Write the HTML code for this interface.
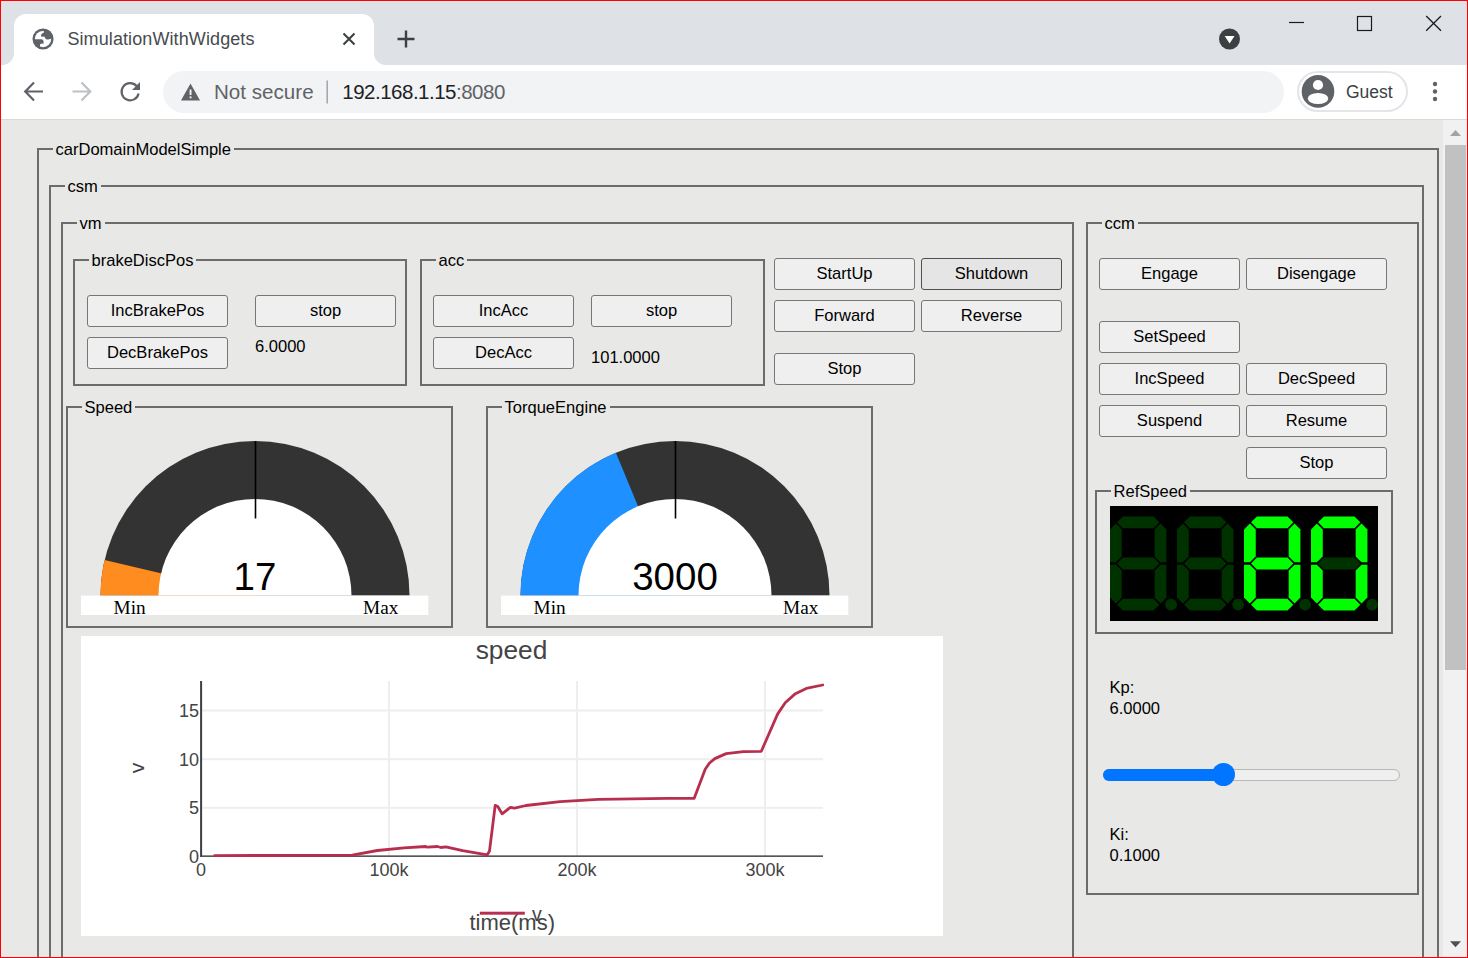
<!DOCTYPE html>
<html>
<head>
<meta charset="utf-8">
<title>SimulationWithWidgets</title>
<style>
html,body{margin:0;padding:0;}
body{width:1468px;height:958px;position:relative;overflow:hidden;background:#e8e8e6;font-family:"Liberation Sans",sans-serif;font-size:16px;color:#000;}
.abs{position:absolute;}
#frame{position:absolute;left:0;top:0;width:1466px;height:956px;border:1px solid #ff0000;z-index:100;pointer-events:none;}
/* browser chrome */
#titlebar{position:absolute;left:0;top:0;width:1468px;height:65px;background:#dee1e6;}
#tab{position:absolute;left:14px;top:14px;width:360px;height:51px;background:#fff;border-radius:12px 12px 0 0;}
#tabl{position:absolute;left:2px;top:53px;width:12px;height:12px;background:radial-gradient(circle at 0 0,#dee1e6 11.5px,#fff 12.5px);}
#tabr{position:absolute;left:374px;top:53px;width:12px;height:12px;background:radial-gradient(circle at 100% 0,#dee1e6 11.5px,#fff 12.5px);}
#tabtitle{position:absolute;left:67.4px;top:27.3px;font-size:18px;letter-spacing:0.1px;color:#474b4f;white-space:nowrap;line-height:24px;}
#toolbar{position:absolute;left:0;top:65px;width:1468px;height:54px;background:#fff;border-bottom:1px solid #d8d9db;}
#omni{position:absolute;left:163px;top:71px;width:1121px;height:42px;border-radius:21px;background:#f1f3f4;}
.ui{font-size:20px;line-height:28px;white-space:nowrap;}
#guest{position:absolute;left:1297px;top:71px;width:110.5px;height:41px;border:2px solid #e3e5e8;border-radius:21px;box-sizing:border-box;}
/* page */
.fs{position:absolute;border:2px solid #6c6c6c;box-sizing:border-box;}
.lg{position:absolute;background:#e8e8e6;white-space:nowrap;line-height:18px;height:18px;padding:0 3px;font-size:16.55px;margin:1px 0 0 -0.5px;}
.btn{position:absolute;box-sizing:border-box;width:141px;height:32px;border:1px solid #767676;border-radius:3px;background:#efefef;text-align:center;line-height:29px;font-size:16.55px;white-space:nowrap;}
.btn.hov{background:#e5e5e5;border-color:#4f4f4f;}
.txt{position:absolute;white-space:nowrap;line-height:18px;font-size:16.55px;margin-top:1px;}
</style>
</head>
<body>
<!-- BROWSER CHROME -->
<div id="titlebar"></div>
<div id="tab"></div><div id="tabl"></div><div id="tabr"></div>
<div id="tabtitle">SimulationWithWidgets</div>
<div id="toolbar"></div>
<div id="omni"></div>
<!-- CHROME ICONS -->
<svg class="abs" style="left:0;top:0;" width="1468" height="120" viewBox="0 0 1468 120">
<!-- favicon globe -->
<g transform="translate(43.03,39.03)">
<circle cx="0" cy="0" r="10.55" fill="#5f6368"/>
<circle cx="0" cy="0" r="8.15" fill="#fff"/>
<path d="M1.25 -9.5 L0.63 -6.26 Q-1.4 -5.6 -1.9 -4.2 L-2.04 -2.5 L1.57 -2.19 Q1.8 -0.6 2.9 -0.1 Q5 1.2 7.83 -0.31 L9.5 -0.5 L9 -5 L6 -8.5 Z" fill="#5f6368"/>
<path d="M-9.5 0.16 L-1.25 0.16 Q0.4 0.5 0.5 2.2 L0.63 4.38 L-2.2 4.8 Q-3.2 5.4 -3.13 6.9 L-2.5 9.5 L-6.5 7.5 L-9 4 Z" fill="#5f6368"/>
</g>
<!-- tab close -->
<path d="M343.5 33.5 L354.5 44.5 M354.5 33.5 L343.5 44.5" stroke="#3c4043" stroke-width="2.1" fill="none"/>
<!-- new tab plus -->
<path d="M397.5 39 L414.5 39 M406 30.5 L406 47.5" stroke="#3c4043" stroke-width="2.4" fill="none"/>
<!-- tab search -->
<circle cx="1229.5" cy="39" r="10.5" fill="#3c4043"/>
<path d="M1224.7 36 L1234.5 36 L1229.6 43.6 Z" fill="#fff"/>
<!-- window controls -->
<path d="M1289 22.5 L1304 22.5" stroke="#1b1b1b" stroke-width="1.2"/>
<rect x="1357.5" y="16.5" width="14" height="14" fill="none" stroke="#1b1b1b" stroke-width="1.2"/>
<path d="M1426.2 16 L1441 30.8 M1441 16 L1426.2 30.8" stroke="#1b1b1b" stroke-width="1.3"/>
<!-- back -->
<path d="M43 91.5 L26 91.5 M34 82.5 L25.2 91.5 L34 100.5" stroke="#5f6368" stroke-width="2.2" fill="none"/>
<!-- forward -->
<path d="M72.5 91.5 L89.5 91.5 M81.5 82.5 L90.3 91.5 L81.5 100.5" stroke="#bdc1c6" stroke-width="2.2" fill="none"/>
<!-- reload -->
<path d="M136.6 86 A8.6 8.6 0 1 0 138.6 93.5" stroke="#5f6368" stroke-width="2.2" fill="none"/>
<path d="M140 82 L140 90 L132 90 Z" fill="#5f6368"/>
<!-- warning -->
<path d="M190.5 83.5 L200 100.5 L181 100.5 Z" fill="#5f6368"/>
<rect x="189.6" y="89.5" width="1.9" height="5.5" fill="#f1f3f4"/>
<rect x="189.6" y="96.4" width="1.9" height="1.9" fill="#f1f3f4"/>
<!-- separator -->
<rect x="326.5" y="80.5" width="1.4" height="23" fill="#9aa0a6"/>
<!-- guest avatar -->
<clipPath id="avc"><circle cx="1318" cy="91.4" r="16.3"/></clipPath>
<circle cx="1318" cy="91.4" r="16.3" fill="#5f6368"/>
<circle cx="1318" cy="85" r="5.1" fill="#fff"/>
<ellipse cx="1318" cy="98.5" rx="10.2" ry="5.5" fill="#fff" clip-path="url(#avc)"/>
<!-- menu -->
<circle cx="1435" cy="84" r="2.2" fill="#5f6368"/><circle cx="1435" cy="91.5" r="2.2" fill="#5f6368"/><circle cx="1435" cy="99" r="2.2" fill="#5f6368"/>
</svg>
<div class="abs ui" style="left:214px;top:78px;color:#5f6368;font-size:20.6px;">Not secure</div>
<div class="abs ui" style="left:342.3px;top:77.6px;color:#202124;font-size:20.5px;letter-spacing:-0.5px;">192.168.1.15<span style="color:#5f6368">:8080</span></div>
<div id="guest"></div>
<div class="abs ui" style="left:1346px;top:78px;color:#3c4043;font-size:17.5px;">Guest</div>
<!-- PAGE -->
<div id="page">
<div class="fs" style="left:37px;top:148px;width:1402px;height:900px;"></div>
<div class="lg" style="left:53px;top:140px;">carDomainModelSimple</div>
<div class="fs" style="left:49px;top:185px;width:1375px;height:900px;"></div>
<div class="lg" style="left:65px;top:177px;">csm</div>
<div class="fs" style="left:61px;top:222px;width:1013px;height:900px;"></div>
<div class="lg" style="left:77px;top:214px;">vm</div>
<div class="fs" style="left:1086px;top:222px;width:333px;height:673px;"></div>
<div class="lg" style="left:1102px;top:214px;">ccm</div>
<!-- VM CONTENT -->
<div class="fs" style="left:73px;top:259px;width:334px;height:127px;"></div>
<div class="lg" style="left:89px;top:251px;">brakeDiscPos</div>
<div class="btn" style="left:87px;top:295px;">IncBrakePos</div>
<div class="btn" style="left:255px;top:295px;">stop</div>
<div class="btn" style="left:87px;top:337px;">DecBrakePos</div>
<div class="txt" style="left:255px;top:337px;">6.0000</div>
<div class="fs" style="left:420px;top:259px;width:345px;height:127px;"></div>
<div class="lg" style="left:436px;top:251px;">acc</div>
<div class="btn" style="left:433px;top:295px;">IncAcc</div>
<div class="btn" style="left:591px;top:295px;">stop</div>
<div class="btn" style="left:433px;top:337px;">DecAcc</div>
<div class="txt" style="left:591px;top:348px;">101.0000</div>
<div class="btn" style="left:774px;top:258px;">StartUp</div>
<div class="btn hov" style="left:921px;top:258px;">Shutdown</div>
<div class="btn" style="left:774px;top:300px;">Forward</div>
<div class="btn" style="left:921px;top:300px;">Reverse</div>
<div class="btn" style="left:774px;top:353px;">Stop</div>
<div class="fs" style="left:66px;top:406px;width:387px;height:222px;"></div>
<div class="lg" style="left:82px;top:398px;">Speed</div>
<svg class="abs" style="left:81px;top:430px;" width="348" height="186" viewBox="81 430 348 186">
<path d="M100.5 595.5 A154.5 154.5 0 0 1 409.5 595.5 Z" fill="#333333"/>
<path d="M255 595.5 L100.5 595.5 A154.5 154.5 0 0 1 104.65 559.95 Z" fill="#ff8c1e"/>
<path d="M158.5 595.5 A96.5 96.5 0 0 1 351.5 595.5 Z" fill="#ffffff"/>
<rect x="81" y="595.6" width="347.3" height="19.4" fill="#ffffff"/>
<line x1="255.5" y1="441" x2="255.5" y2="518.5" stroke="#000" stroke-width="1.6"/>
<text x="255" y="589.5" text-anchor="middle" font-family="Liberation Sans, sans-serif" font-size="38.5" fill="#000">17</text>
<text x="129.7" y="613.5" text-anchor="middle" font-family="Liberation Serif, serif" font-size="19.3" fill="#000">Min</text>
<text x="380.7" y="613.5" text-anchor="middle" font-family="Liberation Serif, serif" font-size="19.3" fill="#000">Max</text>
</svg>
<div class="fs" style="left:486px;top:406px;width:387px;height:222px;"></div>
<div class="lg" style="left:502px;top:398px;">TorqueEngine</div>
<svg class="abs" style="left:501px;top:430px;" width="348" height="186" viewBox="501 430 348 186">
<path d="M520.5 595.5 A154.5 154.5 0 0 1 829.5 595.5 Z" fill="#333333"/>
<path d="M675 595.5 L520.5 595.5 A154.5 154.5 0 0 1 615.88 452.76 Z" fill="#1e90ff"/>
<path d="M578.5 595.5 A96.5 96.5 0 0 1 771.5 595.5 Z" fill="#ffffff"/>
<rect x="501" y="595.6" width="347.3" height="19.4" fill="#ffffff"/>
<line x1="675.5" y1="441" x2="675.5" y2="518.5" stroke="#000" stroke-width="1.6"/>
<text x="675" y="589.5" text-anchor="middle" font-family="Liberation Sans, sans-serif" font-size="38.5" fill="#000">3000</text>
<text x="549.7" y="613.5" text-anchor="middle" font-family="Liberation Serif, serif" font-size="19.3" fill="#000">Min</text>
<text x="800.7" y="613.5" text-anchor="middle" font-family="Liberation Serif, serif" font-size="19.3" fill="#000">Max</text>
</svg>
<svg class="abs" style="left:81px;top:636px;" width="862" height="300" viewBox="81 636 862 300">
<rect x="81" y="636" width="862" height="300" fill="#ffffff"/>
<rect x="388" y="681" width="2" height="175" fill="#eeeeee"/>
<rect x="576" y="681" width="2" height="175" fill="#eeeeee"/>
<rect x="764" y="681" width="2" height="175" fill="#eeeeee"/>
<rect x="202" y="709.5" width="621" height="2" fill="#eeeeee"/>
<rect x="202" y="758.2" width="621" height="2" fill="#eeeeee"/>
<rect x="202" y="806.8" width="621" height="2" fill="#eeeeee"/>
<rect x="201" y="855.4" width="622" height="1.5" fill="#444444"/>
<rect x="200.1" y="681" width="2" height="176" fill="#3f3f3f"/>
<path d="M214.7 855.6 L352.3 855.2 L377.4 850.5 L404.1 847.8 L425.8 846.5 L427.5 847.2 L437.5 846.5 L440.9 847.5 L445.9 846.8 L462.6 850.6 L487.3 854.8 L489.5 851.0 L495.2 805.4 L497.8 806.5 L502.1 813.9 L510.4 807.3 L514.5 808.2 L525.9 805.5 L560.2 801.7 L598.4 799.4 L667.0 798.3 L694.2 798.3 L705.2 769.3 L709.5 763.0 L714.8 758.6 L726.2 753.6 L743.4 751.7 L761.3 751.3 L777.7 713.9 L785.4 702.5 L794.9 694.1 L806.3 688.4 L822.7 685.0" fill="none" stroke="#b82e4e" stroke-width="2.8" stroke-linejoin="round" stroke-linecap="round"/>
<text x="511.5" y="658.7" text-anchor="middle" font-family="Liberation Sans, sans-serif" font-size="26.3" fill="#444444">speed</text>
<text x="199" y="717.0" text-anchor="end" font-family="Liberation Sans, sans-serif" font-size="18" fill="#444444">15</text>
<text x="199" y="765.7" text-anchor="end" font-family="Liberation Sans, sans-serif" font-size="18" fill="#444444">10</text>
<text x="199" y="814.3" text-anchor="end" font-family="Liberation Sans, sans-serif" font-size="18" fill="#444444">5</text>
<text x="199" y="862.5" text-anchor="end" font-family="Liberation Sans, sans-serif" font-size="18" fill="#444444">0</text>
<text x="201" y="876" text-anchor="middle" font-family="Liberation Sans, sans-serif" font-size="18" fill="#444444">0</text>
<text x="389" y="876" text-anchor="middle" font-family="Liberation Sans, sans-serif" font-size="18" fill="#444444">100k</text>
<text x="577" y="876" text-anchor="middle" font-family="Liberation Sans, sans-serif" font-size="18" fill="#444444">200k</text>
<text x="765" y="876" text-anchor="middle" font-family="Liberation Sans, sans-serif" font-size="18" fill="#444444">300k</text>
<text transform="translate(144,768) rotate(-90)" text-anchor="middle" font-family="Liberation Sans, sans-serif" font-size="21" fill="#444444">v</text>
<text x="512.2" y="930" text-anchor="middle" font-family="Liberation Sans, sans-serif" font-size="22" fill="#444444">time(ms)</text>
<rect x="479.8" y="911.7" width="45" height="3" fill="#b82e4e"/>
<text x="532" y="921" font-family="Liberation Sans, sans-serif" font-size="19.5" fill="#444444">v</text>
</svg>
<!-- CCM CONTENT -->
<div class="btn" style="left:1099px;top:258px;">Engage</div>
<div class="btn" style="left:1246px;top:258px;">Disengage</div>
<div class="btn" style="left:1099px;top:321px;">SetSpeed</div>
<div class="btn" style="left:1099px;top:363px;">IncSpeed</div>
<div class="btn" style="left:1246px;top:363px;">DecSpeed</div>
<div class="btn" style="left:1099px;top:405px;">Suspend</div>
<div class="btn" style="left:1246px;top:405px;">Resume</div>
<div class="btn" style="left:1246px;top:447px;">Stop</div>
<div class="fs" style="left:1095px;top:490px;width:298px;height:144px;"></div>
<div class="lg" style="left:1111px;top:482px;">RefSpeed</div>
<div class="abs" style="left:1110px;top:506px;width:268px;height:115px;background:#000;"></div>
<svg class="abs" style="left:1110px;top:506px;" width="67" height="115" viewBox="0 0 57 80" preserveAspectRatio="xMidYMid meet">
<polygon points="11 0,37 0,42 5,37 10,11 10,6 5" fill="#003200"/>
<polygon points="0 11,5 6,10 11,10 34,5 39,0 39" transform="translate(48,0) scale(-1,1)" fill="#003200"/>
<polygon points="0 11,5 6,10 11,10 34,5 39,0 39" transform="translate(48,80) scale(-1,-1)" fill="#003200"/>
<polygon points="11 0,37 0,42 5,37 10,11 10,6 5" transform="translate(0,70)" fill="#003200"/>
<polygon points="0 11,5 6,10 11,10 34,5 39,0 39" transform="translate(0,80) scale(1,-1)" fill="#003200"/>
<polygon points="0 11,5 6,10 11,10 34,5 39,0 39" fill="#003200"/>
<polygon points="11 0,37 0,42 5,37 10,11 10,6 5" transform="translate(0,35)" fill="#003200"/>
<circle cx="52" cy="75" r="5" fill="#003200"/>
</svg>
<svg class="abs" style="left:1177px;top:506px;" width="67" height="115" viewBox="0 0 57 80" preserveAspectRatio="xMidYMid meet">
<polygon points="11 0,37 0,42 5,37 10,11 10,6 5" fill="#003200"/>
<polygon points="0 11,5 6,10 11,10 34,5 39,0 39" transform="translate(48,0) scale(-1,1)" fill="#003200"/>
<polygon points="0 11,5 6,10 11,10 34,5 39,0 39" transform="translate(48,80) scale(-1,-1)" fill="#003200"/>
<polygon points="11 0,37 0,42 5,37 10,11 10,6 5" transform="translate(0,70)" fill="#003200"/>
<polygon points="0 11,5 6,10 11,10 34,5 39,0 39" transform="translate(0,80) scale(1,-1)" fill="#003200"/>
<polygon points="0 11,5 6,10 11,10 34,5 39,0 39" fill="#003200"/>
<polygon points="11 0,37 0,42 5,37 10,11 10,6 5" transform="translate(0,35)" fill="#003200"/>
<circle cx="52" cy="75" r="5" fill="#003200"/>
</svg>
<svg class="abs" style="left:1244px;top:506px;" width="67" height="115" viewBox="0 0 57 80" preserveAspectRatio="xMidYMid meet">
<polygon points="11 0,37 0,42 5,37 10,11 10,6 5" fill="#00ff00"/>
<polygon points="0 11,5 6,10 11,10 34,5 39,0 39" transform="translate(48,0) scale(-1,1)" fill="#00ff00"/>
<polygon points="0 11,5 6,10 11,10 34,5 39,0 39" transform="translate(48,80) scale(-1,-1)" fill="#00ff00"/>
<polygon points="11 0,37 0,42 5,37 10,11 10,6 5" transform="translate(0,70)" fill="#00ff00"/>
<polygon points="0 11,5 6,10 11,10 34,5 39,0 39" transform="translate(0,80) scale(1,-1)" fill="#00ff00"/>
<polygon points="0 11,5 6,10 11,10 34,5 39,0 39" fill="#00ff00"/>
<polygon points="11 0,37 0,42 5,37 10,11 10,6 5" transform="translate(0,35)" fill="#00ff00"/>
<circle cx="52" cy="75" r="5" fill="#003200"/>
</svg>
<svg class="abs" style="left:1311px;top:506px;" width="67" height="115" viewBox="0 0 57 80" preserveAspectRatio="xMidYMid meet">
<polygon points="11 0,37 0,42 5,37 10,11 10,6 5" fill="#00ff00"/>
<polygon points="0 11,5 6,10 11,10 34,5 39,0 39" transform="translate(48,0) scale(-1,1)" fill="#00ff00"/>
<polygon points="0 11,5 6,10 11,10 34,5 39,0 39" transform="translate(48,80) scale(-1,-1)" fill="#00ff00"/>
<polygon points="11 0,37 0,42 5,37 10,11 10,6 5" transform="translate(0,70)" fill="#00ff00"/>
<polygon points="0 11,5 6,10 11,10 34,5 39,0 39" transform="translate(0,80) scale(1,-1)" fill="#00ff00"/>
<polygon points="0 11,5 6,10 11,10 34,5 39,0 39" fill="#00ff00"/>
<polygon points="11 0,37 0,42 5,37 10,11 10,6 5" transform="translate(0,35)" fill="#003200"/>
<circle cx="52" cy="75" r="5" fill="#003200"/>
</svg>
<div class="txt" style="left:1109.5px;top:678px;">Kp:</div><div class="txt" style="left:1109.5px;top:699px;">6.0000</div>
<div class="txt" style="left:1109.5px;top:825px;">Ki:</div><div class="txt" style="left:1109.5px;top:846px;">0.1000</div>
<div class="abs" style="left:1103px;top:768.5px;width:297px;height:12px;box-sizing:border-box;border:1px solid #b8b8b8;border-radius:6px;background:#efefef;"></div>
<div class="abs" style="left:1103px;top:768.5px;width:122px;height:12px;border-radius:6px;background:#0075ff;"></div>
<div class="abs" style="left:1212px;top:762.5px;width:23px;height:23px;border-radius:50%;background:#0075ff;"></div>
</div>
<!-- SCROLLBAR -->
<div class="abs" style="left:1443px;top:120px;width:24px;height:838px;background:#f1f1f1;"></div>
<div class="abs" style="left:1445px;top:145px;width:21px;height:525px;background:#c1c1c1;"></div>
<svg class="abs" style="left:1443px;top:120px;" width="24" height="838" viewBox="0 0 24 838"><path d="M7 16 L12.5 10 L18 16 Z" fill="#a3a3a3"/><path d="M7 821.3 L18 821.3 L12.5 827.3 Z" fill="#505050"/></svg>
<div id="frame"></div>
</body>
</html>
